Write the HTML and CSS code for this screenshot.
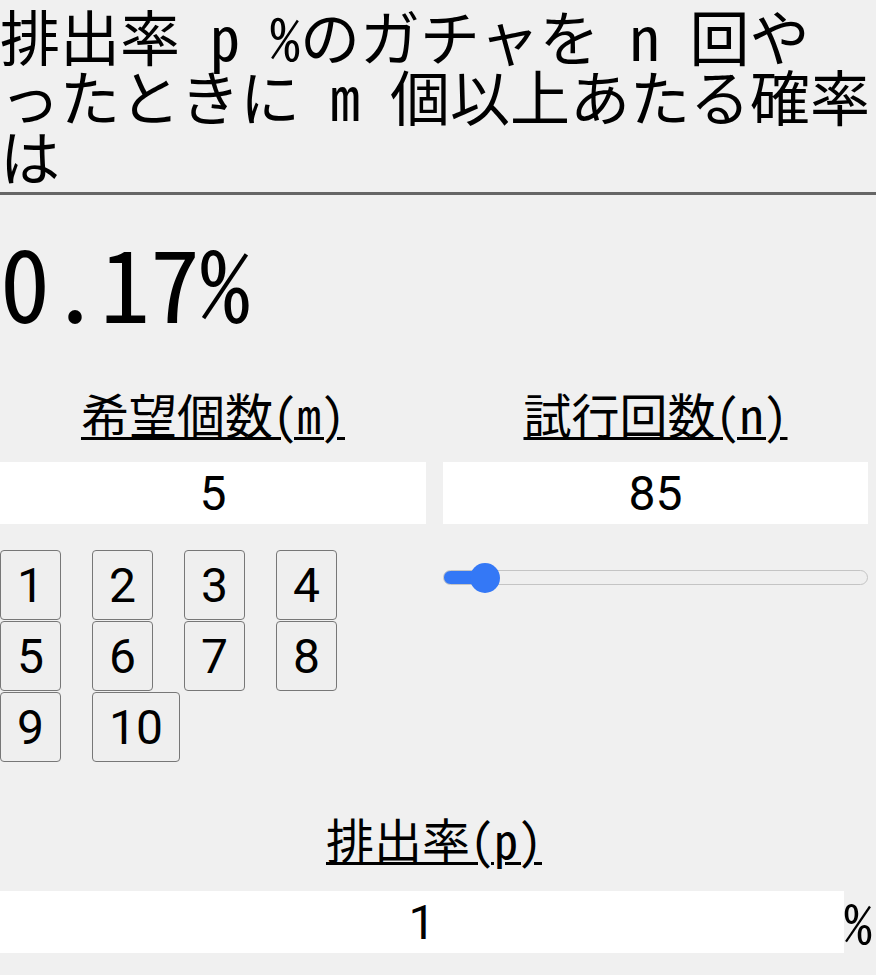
FILE: index.html
```html
<!DOCTYPE html>
<html lang="ja">
    <head>
        <meta charset="utf-8">
        <title>ガチャ確率計算</title>
        <link rel="stylesheet" href="styles.css">
    </head>
    <body>
        <h1 class="title">排出率 p %のガチャを n 回や<br>ったときに m 個以上あたる確率は</h1>

        <div class="result">0.17%</div>

        <div class="columns">
            <div class="col">
                <h2 class="label">希望個数(m)</h2>
                <input type="text" class="num" value="5">
                <div class="picks">
                    <button type="button">1</button>
                    <button type="button">2</button>
                    <button type="button">3</button>
                    <button type="button">4</button>
                    <button type="button">5</button>
                    <button type="button">6</button>
                    <button type="button">7</button>
                    <button type="button">8</button>
                    <button type="button">9</button>
                    <button type="button">10</button>
                </div>
            </div>
            <div class="col">
                <h2 class="label">試行回数(n)</h2>
                <input type="text" class="num" value="85">
                <input type="range" class="slider" min="0" max="1300" value="85" style="--fill: 10%;">
            </div>
        </div>

        <div class="rate">
            <h2 class="label">排出率(p)</h2>
            <div class="rate-row">
                <input type="text" class="num" value="1">
                <span class="unit">%</span>
            </div>
        </div>
    </body>
</html>
```

FILE: styles.css
```css
body {
    margin: 0;
    padding: 0 8px 0 0;
    background: #f0f0f0;
    color: #000;
    font-family: "Noto Sans CJK JP", sans-serif;
    font-feature-settings: "hwid";
}
.title {
    margin: 0 -8px 0 0;
    padding: 5px 0 7px;
    font-size: 60px;
    line-height: 60px;
    font-weight: normal;
    border-bottom: 3px solid #666;
}
.result {
    margin-top: 35px;
    font-size: 100px;
    line-height: 100px;
}
.columns {
    display: grid;
    grid-template-columns: 426px 1fr;
    column-gap: 17px;
    margin-top: 59px;
}
.label {
    margin: 0;
    font-size: 48px;
    line-height: 48px;
    font-weight: normal;
    text-align: center;
    text-decoration: underline;
    text-decoration-thickness: 3px;
    text-underline-offset: 3px;
}
.num {
    display: block;
    box-sizing: border-box;
    width: 100%;
    height: 62px;
    margin-top: 25px;
    padding: 0;
    border: none;
    background: #fff;
    font-family: Roboto, sans-serif;
    font-size: 48px;
    text-align: center;
    color: #000;
}
.picks {
    display: flex;
    flex-wrap: wrap;
    column-gap: 31px;
    row-gap: 1px;
    margin-top: 26px;
}
.picks button {
    box-sizing: border-box;
    height: 70px;
    padding: 0 16px;
    border: 1px solid #777;
    border-radius: 4px;
    background: #efefef;
    font-family: Roboto, sans-serif;
    font-size: 48px;
    color: #000;
}
.slider {
    -webkit-appearance: none;
    appearance: none;
    display: block;
    width: 100%;
    height: 32px;
    margin: 37px 0 0;
    background: transparent;
}
.slider::-webkit-slider-runnable-track {
    height: 15px;
    border: 1px solid #c4c4c4;
    border-radius: 9px;
    background: linear-gradient(to right, #3478f6 var(--fill), #efefef var(--fill));
}
.slider::-webkit-slider-thumb {
    -webkit-appearance: none;
    width: 30px;
    height: 30px;
    margin-top: -8px;
    border: none;
    border-radius: 50%;
    background: #3478f6;
}
.rate {
    margin-top: 52px;
}
.rate-row {
    display: flex;
    align-items: flex-start;
    margin-top: 29px;
}
.rate-row .num {
    flex: 1;
    margin-top: 0;
}
.unit {
    width: 24px;
    font-size: 56px;
    line-height: 58px;
}
```
